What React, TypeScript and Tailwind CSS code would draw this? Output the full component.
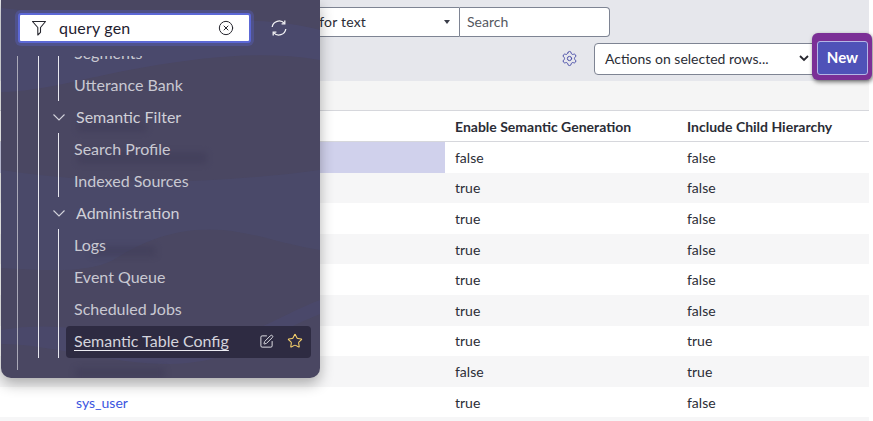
import { CircleX, Settings, SquarePen, Star } from "lucide-react"

const rows = [
  { name: "", semantic: "false", child: "false" },
  { name: "", semantic: "true", child: "false" },
  { name: "", semantic: "true", child: "false" },
  { name: "", semantic: "true", child: "false" },
  { name: "", semantic: "true", child: "false" },
  { name: "", semantic: "true", child: "false" },
  { name: "", semantic: "true", child: "true" },
  { name: "", semantic: "false", child: "true" },
  { name: "sys_user", semantic: "true", child: "false" },
]

function Chevron() {
  return (
    <svg width="14" height="14" viewBox="0 0 14 14" fill="none" stroke="#d4d4dc" strokeWidth="1.1" className="mr-[10px] ml-[-6px] shrink-0">
      <path d="M1.5 4.5 7 10l5.5-5.5" />
    </svg>
  )
}

function Leaf({ label }: { label: string }) {
  return <div className="h-8 flex items-center pl-[15px] text-[#c9c9d2]">{label}</div>
}

function Heading({ label }: { label: string }) {
  return (
    <div className="h-8 flex items-center text-[#d0d0d8]">
      <Chevron />
      {label}
    </div>
  )
}

function NavPanel() {
  return (
    <div className="absolute left-px top-0 w-[319px] h-[378px] rounded-b-[10px] overflow-hidden bg-[#4a4762] shadow-[0_6px_14px_rgba(0,0,0,0.3)] flex flex-col font-['Lato',sans-serif] text-[16px]">
      <svg className="absolute inset-0" width="319" height="378" viewBox="0 0 319 378">
        <path d="M0 8C60 14 130 30 200 22 250 18 290 22 319 30v30C260 50 200 58 150 66 90 76 40 92 0 92z" fill="#4b4a70" opacity="0.75" />
        <path d="M0 170C70 180 170 190 319 170v80C280 244 260 234 222 230 172 226 138 244 112 260 85 274 40 270 0 268z" fill="#4a4a6c" opacity="0.8" />
        <path d="M0 330c60-10 110 4 170 14 60 8 110-30 149-44v14c-50 20-90 50-150 50-60 0-120-20-169-20z" fill="#4b4a70" opacity="0.6" />
        <g fill="#3f3c58" opacity="0.55" className="blur-[3px]">
          <rect x="76" y="122" width="70" height="10" rx="4" />
          <rect x="76" y="152" width="130" height="12" rx="4" />
          <rect x="90" y="246" width="65" height="10" rx="4" />
          <rect x="74" y="368" width="90" height="10" rx="4" />
        </g>
      </svg>

      <div className="relative h-14 shrink-0 flex items-start pt-[13px] pl-[17px]">
        <div className="w-[233px] h-[30px] bg-white rounded-[3px] border-2 border-[#5c68d6] shadow-[0_0_0_3px_rgba(92,104,214,0.3)] flex items-center pl-[11px] pr-[15px] text-[#1f2130]">
          <svg width="16" height="16" viewBox="0 0 16 16" fill="none" stroke="#26262e" strokeWidth="1.1" strokeLinejoin="round" className="shrink-0">
            <path d="M1.5 1.5h13L9.5 7.5v4.8L6.8 15V7.5z" />
          </svg>
          <span className="ml-[12px] flex-1 tracking-[0.2px]">query gen</span>
          <CircleX size={16} strokeWidth={1.5} color="#26262e" />
        </div>
        <svg width="18" height="18" viewBox="0 0 18 18" fill="none" stroke="#f2f2f5" strokeWidth="1.3" className="ml-[19px] mt-[6px]">
          <path d="M2.2 8A7 7 0 0 1 14.4 4.4M15.8 10a7 7 0 0 1-12.2 3.6" />
          <path d="M14.8 1.4v3.4h-3.2M3.2 16.6v-3.4h3.2" />
        </svg>
      </div>

      <div className="relative flex-1 overflow-hidden pl-4 pb-2">
        <div className="h-[314px] flex flex-col border-l border-[#aaa9b8] pl-5">
          <div className="shrink-0 border-l border-[#e8e8f0] pl-[19px] mt-[-19px]">
            <div className="border-l border-[#e8e8f0]">
              <Leaf label="Segments" />
              <Leaf label="Utterance Bank" />
            </div>
            <Heading label="Semantic Filter" />
            <div className="border-l border-[#e8e8f0]">
              <Leaf label="Search Profile" />
              <Leaf label="Indexed Sources" />
            </div>
            <Heading label="Administration" />
            <div className="border-l border-[#e8e8f0]">
              <Leaf label="Logs" />
              <Leaf label="Event Queue" />
              <Leaf label="Scheduled Jobs" />
              <div className="h-8 mt-px ml-[7px] w-[245px] pl-2 pr-[8px] pb-[2px] rounded bg-[#2e2b42] flex items-center text-[#d4d4dc]">
                <span className="flex-1 underline underline-offset-[3px] decoration-[#ecebf2]">Semantic Table Config</span>
                <SquarePen size={15} strokeWidth={1.5} color="#e8e8ec" className="mr-[13px]" />
                <Star size={16} strokeWidth={1.6} color="#f5cf6a" />
              </div>
            </div>
          </div>
        </div>
      </div>
    </div>
  )
}

export default function App() {
  return (
    <div className="relative w-[873px] h-[421px] overflow-hidden bg-white font-['Lato',sans-serif] text-[14px] text-[#2b2d36]">
      <div className="w-[869px]">
        <div className="h-[81px] bg-[#e6e7ec] pt-[7px]">
          <div className="flex pl-[260px] h-[30px]">
            <div className="w-[200px] h-full bg-white border border-[#7e8493] rounded-l-[4px] flex items-center pl-[12px] pr-[9px] pb-px">
              <span className="flex-1 tracking-[0.2px]">Search for text</span>
              <svg width="6" height="4" viewBox="0 0 6 4" fill="#3a3d48"><path d="M0 0h6L3 4z" /></svg>
            </div>
            <div className="w-[150px] h-full bg-white border border-l-0 border-[#7e8493] rounded-r-[4px] flex items-center pl-[7px] pb-px text-[#55585f]">Search</div>
          </div>
          <div className="flex items-center justify-end h-[33px] mt-[5px] mr-[-3px]">
            <Settings size={17} strokeWidth={1.4} color="#4b4fa8" className="mr-[16px]" />
            <div className="w-[221px] h-8 bg-white border border-[#7e8493] rounded-l-[4px] flex items-center pl-[10px] pr-[5px] pb-px">
              <span className="flex-1">Actions on selected rows...</span>
              <svg width="10" height="7" viewBox="0 0 10 7" fill="none" stroke="#26262e" strokeWidth="1.8"><path d="M1 1l4 4 4-4" /></svg>
            </div>
            <div className="relative ml-[-3px] mt-[-5px] pt-[8px] pb-[5px] pl-[5px] pr-[4px] rounded-[6px] bg-[#7b2f96] shadow-[1px_2px_4px_rgba(0,0,0,0.55)]">
              <button className="block w-[51px] h-[34px] pb-px bg-[#4f52b8] border border-[#b4b6e6] rounded-[3px] text-white text-[15px] font-bold">New</button>
            </div>
          </div>
        </div>
        <div className="h-[30px] bg-[#f5f5f5] border-b border-[#d6d7dc]" />
        <div className="grid grid-cols-[445px_232px_1fr] h-[31px] items-center border-b border-[#d6d7dc] font-bold text-[#2b2d36]">
          <div />
          <div className="pl-[10px]">Enable Semantic Generation</div>
          <div className="pl-[10px]">Include Child Hierarchy</div>
        </div>
        {rows.map((row, i) => (
          <div key={i} className={`grid grid-cols-[445px_232px_1fr] h-[30.6px] items-center ${i % 2 === 1 ? "bg-[#f6f6f7]" : "bg-white"}`}>
            <div className={`h-full flex items-center pl-[76px] text-[#3b55e0] ${i === 0 ? "bg-[#d0d1ec]" : ""}`}>{row.name}</div>
            <div className="pl-[10px]">{row.semantic}</div>
            <div className="pl-[10px]">{row.child}</div>
          </div>
        ))}
        <div className="h-2 bg-[#f6f6f7]" />
      </div>
      <NavPanel />
    </div>
  )
}
